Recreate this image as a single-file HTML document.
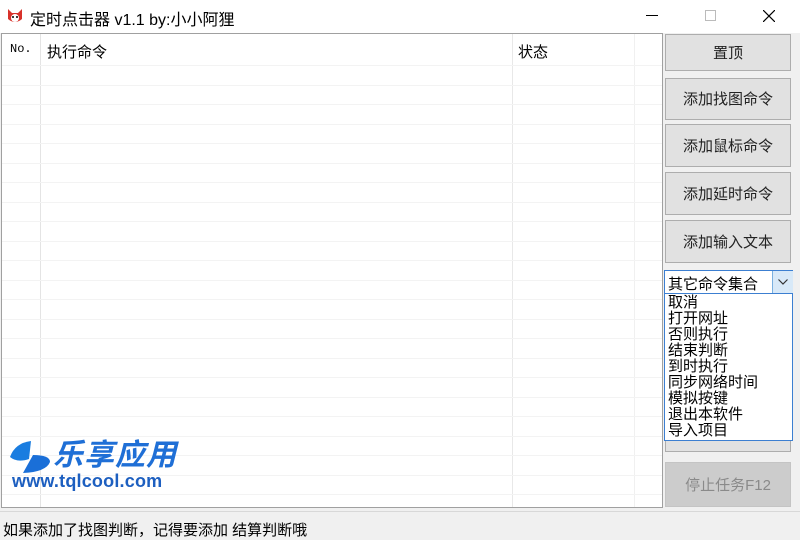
<!DOCTYPE html>
<html><head><meta charset="utf-8"><style>
*{margin:0;padding:0;box-sizing:border-box}
body{width:800px;height:540px;background:#f0f0f0;position:relative;overflow:hidden;font-family:"Liberation Sans","Noto Sans CJK SC",sans-serif;font-size:14px;color:#000}
.abs{position:absolute}
.title{left:0;top:0;width:800px;height:33px;background:#fff}
.list{left:1px;top:33px;width:662px;height:475px;background:#fff;border:1px solid #a0a0a0}
.row{position:absolute;left:0;width:660px;height:1px;background:#f3f3f3}
.vl{position:absolute;top:0;width:1px;height:473px;background:#f0f0f0}
.btn{position:absolute;left:665px;width:126px;background:#e1e1e1;border:1px solid #adadad;text-align:center;font-size:15px;color:#222}
</style></head><body>
<div class="abs title">
 <svg class="abs" style="left:6px;top:7px" width="18" height="18" viewBox="0 0 18 18"><path d="M2 2 L6 6 L12 6 L16 2 L16 12 Q9 18 2 12 Z" fill="#d8322a"/><circle cx="9" cy="11" r="4" fill="#fff"/><circle cx="7" cy="10" r="1" fill="#000"/><circle cx="11" cy="10" r="1" fill="#000"/></svg>
 <div class="abs" style="left:30px;top:6px;font-size:16px">定时点击器 v1.1 by:小小阿狸</div>
 <div class="abs" style="left:646px;top:15px;width:12px;height:1px;background:#000"></div>
 <div class="abs" style="left:705px;top:10px;width:11px;height:11px;border:1px solid #bbb"></div>
 <svg class="abs" style="left:763px;top:10px" width="12" height="12" viewBox="0 0 12 12"><path d="M0 0L12 12M12 0L0 12" stroke="#000" stroke-width="1.2"/></svg>
</div>
<div class="abs list">
 <div class="vl" style="left:38px;background:#e4e4e4"></div>
 <div class="vl" style="left:510px;background:#e8e8e8"></div>
 <div class="vl" style="left:632px"></div>
 <div class="abs" style="left:8px;top:8px;font-family:'Liberation Mono',monospace;font-size:12px">No.</div>
 <div class="abs" style="left:45px;top:7px;font-size:15px">执行命令</div>
 <div class="abs" style="left:516px;top:7px;font-size:15px">状态</div>
 <div class="row" style="top:31px"></div><div class="row" style="top:51px"></div><div class="row" style="top:70px"></div><div class="row" style="top:90px"></div><div class="row" style="top:109px"></div><div class="row" style="top:129px"></div><div class="row" style="top:148px"></div><div class="row" style="top:168px"></div><div class="row" style="top:187px"></div><div class="row" style="top:207px"></div><div class="row" style="top:226px"></div><div class="row" style="top:246px"></div><div class="row" style="top:265px"></div><div class="row" style="top:285px"></div><div class="row" style="top:304px"></div><div class="row" style="top:324px"></div><div class="row" style="top:343px"></div><div class="row" style="top:363px"></div><div class="row" style="top:382px"></div><div class="row" style="top:402px"></div><div class="row" style="top:421px"></div><div class="row" style="top:441px"></div><div class="row" style="top:460px"></div>
 <svg class="abs" style="left:7px;top:406px" width="42" height="34" viewBox="0 0 42 34"><path d="M22 1 Q6 3 1 17 Q8 23 20 19 Z" fill="#1a7de0"/><path d="M24 15 Q41 15 41 22 Q37 32 14 33 Z" fill="#1a6fd8"/></svg>
 <div class="abs" style="left:51px;top:405px;font-size:30px;font-weight:bold;color:#1f6fd6;letter-spacing:1px;line-height:34px;font-style:italic">乐享应用</div>
 <div class="abs" style="left:10px;top:437px;font-size:18px;font-weight:bold;color:#1d5fc0;letter-spacing:0.2px">www.tqlcool.com</div>
</div>
<div class="btn" style="top:34px;height:37px;line-height:37px">置顶</div>
<div class="btn" style="top:78px;height:42px;line-height:42px">添加找图命令</div>
<div class="btn" style="top:124px;height:43px;line-height:43px">添加鼠标命令</div>
<div class="btn" style="top:172px;height:43px;line-height:43px">添加延时命令</div>
<div class="btn" style="top:220px;height:43px;line-height:43px">添加输入文本</div>
<div class="btn" style="top:430px;height:22px"></div>
<div class="btn" style="top:462px;height:45px;line-height:45px;background:#ccc;border-color:#c4c4c4;color:#8a8a8a">停止任务F12</div>
<div class="abs" style="left:664px;top:270px;width:129px;height:24px;background:#fff;border:1px solid #3c7fd1">
 <div class="abs" style="left:3px;top:2px;font-size:15px">其它命令集合</div>
 <div class="abs" style="left:107px;top:0;width:21px;height:22px;background:#d8e9f8;border-left:1px solid #7ab0e0">
  <svg class="abs" style="left:5px;top:8px" width="10" height="6" viewBox="0 0 10 6"><path d="M0.5 0.5L5 5L9.5 0.5" fill="none" stroke="#333" stroke-width="1.2"/></svg>
 </div>
</div>
<div class="abs" style="left:664px;top:293px;width:129px;height:148px;background:#fff;border:1px solid #3c7fd1;font-size:15px;line-height:16px;padding:1px 0 0 3px">取消<br>打开网址<br>否则执行<br>结束判断<br>到时执行<br>同步网络时间<br>模拟按键<br>退出本软件<br>导入项目</div>
<div class="abs" style="left:0;top:511px;width:800px;height:1px;background:#d8d8d8"></div>
<div class="abs" style="left:3px;top:519px;font-size:15px">如果添加了找图判断，记得要添加 结算判断哦</div>
</body></html>
